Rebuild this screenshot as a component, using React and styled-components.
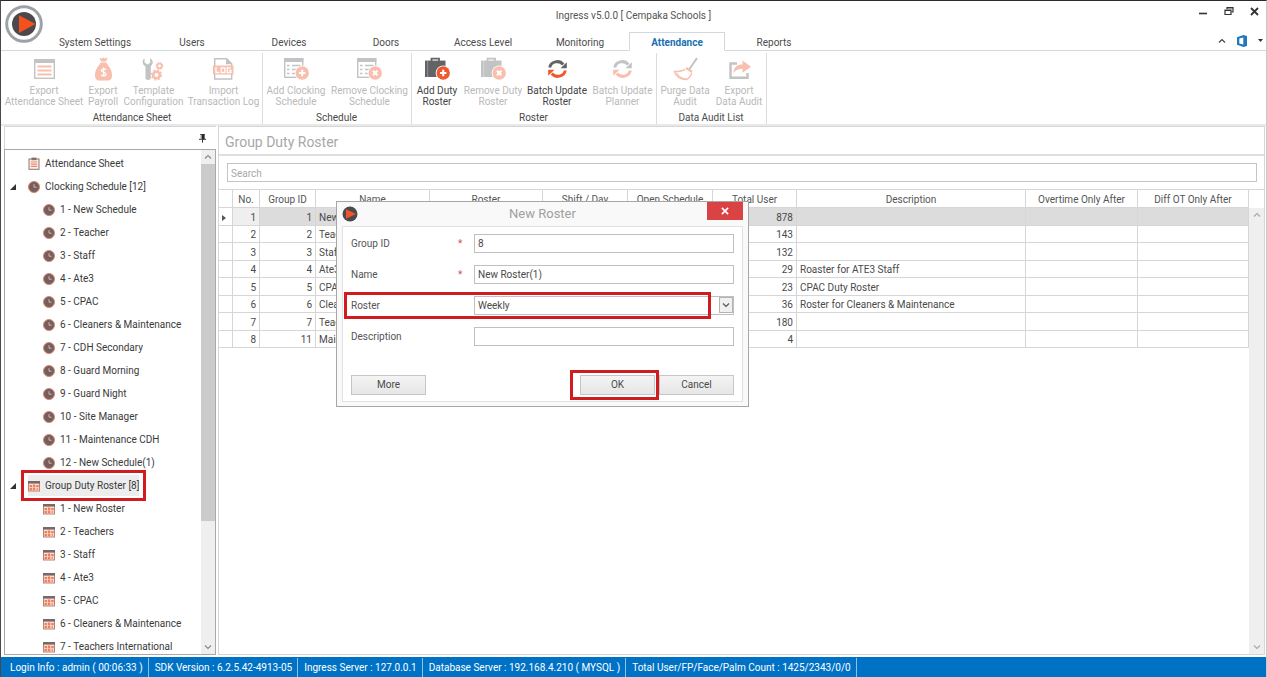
import React from "react";
import styled, { createGlobalStyle } from "styled-components";

const ORANGE = "#ee5a30";
const DARK = "#626367";
const LINE = "#d6d6d6";
const RED = "#d01c1f";

const GlobalStyle = createGlobalStyle`
  *, *::before, *::after { box-sizing: border-box; }
  html, body, #root { height: 100%; }
  body { margin: 0; overflow: hidden; }
  body, button, input, select {
    font-family: Roboto, "Open Sans", sans-serif;
    font-size: 10px;
    line-height: 14px;
    color: #4a4a4a;
  }
  ul { list-style: none; margin: 0; padding: 0; }
  button { border: 0; background: none; padding: 0; }
  svg { display: block; flex: none; }
`;

const Window = styled.div`
  position: relative;
  display: flex;
  flex-direction: column;
  height: 100vh;
  background: #fff;
  border-top: 1px solid #2e2a2e;
  border-left: 1px solid #4a484a;
  border-right: 1px solid #c9c9c9;
`;

const Header = styled.header`
  position: relative;
  display: flex;
  flex-direction: column;
  height: 50px;
  border-bottom: 1px solid #d4d7db;
`;

const TitleBar = styled.div`
  display: grid;
  grid-template-columns: 1fr auto 1fr;
  align-items: center;
  height: 31px;
`;

const WindowTitle = styled.h1`
  grid-column: 2;
  margin: 0;
  padding-bottom: 2px;
  font-size: 10px;
  font-weight: 400;
  color: #555;
`;

const WindowButtons = styled.div`
  display: flex;
  justify-content: flex-end;
  gap: 16px;
  padding: 0 7px 11px 0;
`;

const Logo = styled.div`
  position: absolute;
  left: 3px;
  top: 3px;
`;

const TabRow = styled.nav`
  display: flex;
  flex: 1;
  gap: 1px;
  padding-left: 46px;
  margin-bottom: -1px;
`;

const Tab = styled.button`
  width: 96px;
  height: 19px;
  padding-top: 3px;
  color: ${(p) => (p.$active ? "#1a6faf" : "#4c4c4c")};
  font-weight: ${(p) => (p.$active ? 700 : 400)};
  background: ${(p) => (p.$active ? "#fff" : "none")};
  border: 1px solid ${(p) => (p.$active ? "#d4d7db" : "transparent")};
  border-bottom-color: ${(p) => (p.$active ? "#fff" : "transparent")};
`;

const TabTools = styled.div`
  display: flex;
  align-items: center;
  gap: 10px;
  margin-left: auto;
  padding: 0 3px 2px 0;
`;

const Ribbon = styled.div`
  display: flex;
  height: 75px;
  padding: 2px 0 0 2px;
  border-bottom: 2px solid #e9e9e9;
`;

const RibbonGroup = styled.section`
  display: flex;
  flex-direction: column;
  align-items: center;
  padding-right: 1px;
  border-right: 1px solid #dcdcdc;
`;

const RibbonButtons = styled.div`
  display: flex;
  flex: 1;
`;

const RibbonButton = styled.button`
  display: flex;
  flex-direction: column;
  align-items: center;
  gap: 3px;
  width: ${(p) => p.$width}px;
  padding-top: 4px;
  line-height: 11px;
  white-space: pre;
  color: #444;
  &:disabled { color: #b9b9b9; }
  &:disabled svg { opacity: 0.38; }
`;

const GroupLabel = styled.div`
  line-height: 12px;
`;

const Body = styled.div`
  display: flex;
  flex: 1;
  min-height: 0;
`;

const Sidebar = styled.aside`
  display: flex;
  flex-direction: column;
  width: 217px;
  padding: 0 2px 2px 3px;
`;

const SidebarHeader = styled.div`
  display: flex;
  justify-content: flex-end;
  align-items: center;
  height: 23px;
  padding-right: 10px;
  border-left: 1px solid ${LINE};
  border-top: 1px solid ${LINE};
`;

const TreePanel = styled.div`
  display: flex;
  flex: 1;
  min-height: 0;
  border: 1px solid #a9a9a9;
`;

const TreeArea = styled.div`
  flex: 1;
  overflow: hidden;
  padding-top: 2px;
`;

const Tree = styled.ul``;

const TreeRow = styled.li`
  display: flex;
  align-items: center;
  height: 23px;
  padding-left: ${(p) => (p.$child ? 38 : 5)}px;
`;

const Twisty = styled.span`
  width: 18px;
`;

const TreeItem = styled.button`
  position: relative;
  display: flex;
  align-items: center;
  gap: 5px;
  height: 21px;
  color: #3a3a3a;
  white-space: nowrap;
  background: ${(p) => (p.$selected ? "#ededed" : "none")};
`;

const Marker = styled.span`
  position: absolute;
  inset: ${(p) => p.$inset};
  border: 3px solid ${RED};
  pointer-events: none;
`;

const ScrollBar = styled.div`
  display: flex;
  flex-direction: column;
  align-items: center;
  width: ${(p) => p.$width}px;
  background: #efefef;
`;

const ScrollButton = styled.button`
  display: grid;
  place-items: center;
  width: 100%;
  height: 14px;
`;

const Thumb = styled.div`
  width: 100%;
  height: 357px;
  background: #cbcbcb;
`;

const Spacer = styled.div`
  flex: 1;
`;

const Main = styled.main`
  display: flex;
  flex-direction: column;
  flex: 1;
  min-width: 0;
  margin: 0 1px 2px 0;
  border: 1px solid ${LINE};
`;

const PageTitle = styled.h2`
  margin: 0;
  padding: 0 6px;
  height: 29px;
  line-height: 30px;
  font-size: 14px;
  font-weight: 400;
  color: #a8a8a8;
  border-bottom: 2px solid #dedede;
`;

const SearchArea = styled.div`
  padding: 7px 7px 7px 8px;
`;

const SearchBox = styled.input`
  display: block;
  width: 100%;
  height: 19px;
  padding: 1px 3px 0;
  border: 1px solid #c4c4c4;
  outline: 0;
  &::placeholder { color: #a8a8a8; opacity: 1; }
`;

const GridArea = styled.div`
  display: flex;
  flex: 1;
  min-height: 0;
  border-top: 1px solid ${LINE};
`;

const GridBody = styled.div`
  flex: 1;
  min-width: 0;
`;

const GridTable = styled.table`
  width: 100%;
  table-layout: fixed;
  border-collapse: separate;
  border-spacing: 0;
`;

const Col = styled.col`
  width: ${(p) => (p.$width ? p.$width + "px" : "auto")};
`;

const HeadCell = styled.th`
  height: 18px;
  padding: 2px 0 0;
  font-weight: 400;
  color: #555;
  border-right: 1px solid ${LINE};
  border-bottom: 1px solid ${LINE};
`;

const Row = styled.tr`
  height: 17px;
  &:nth-child(odd) { height: 18px; }
  td { background: ${(p) => (p.$selected ? "#dcdcdc" : "#fff")}; }
  td:nth-child(1) { background: #fff; }
  td:nth-child(2) { background: ${(p) => (p.$selected ? "#efefef" : "#fff")}; }
`;

const Cell = styled.td`
  padding: 2px 3px 0;
  line-height: 14px;
  text-align: ${(p) => (p.$right ? "right" : "left")};
  white-space: nowrap;
  overflow: hidden;
  border-right: 1px solid ${LINE};
  border-bottom: 1px solid ${LINE};
`;

const GridSide = styled.div`
  display: flex;
  flex-direction: column;
  padding-top: 18px;
`;

const SideScroll = styled(ScrollBar)`
  flex: 1;
`;

const StatusBar = styled.footer`
  display: flex;
  align-items: center;
  height: 20px;
  padding-left: 3px;
  background: #0072c6;
`;

const StatusItem = styled.span`
  padding: 1px 5px 0 6px;
  line-height: 18px;
  color: #fff;
  border-right: 1px solid #8fc0e6;
`;

const Dialog = styled.form`
  position: absolute;
  left: 335px;
  top: 200px;
  width: 413px;
  padding: 0 5px 4px;
  background: #f9f9f9;
  border: 1px solid #a6a6a6;
`;

const DialogHeader = styled.div`
  display: grid;
  grid-template-columns: 1fr auto 1fr;
  align-items: center;
  height: 24px;
`;

const DialogTitle = styled.h3`
  margin: 0;
  font-size: 13px;
  font-weight: 400;
  color: #a0a0a0;
`;

const CloseButton = styled.button`
  display: grid;
  place-items: center;
  justify-self: end;
  align-self: start;
  width: 36px;
  height: 18px;
  background: #d94343;
`;

const DialogPanel = styled.div`
  padding: 7px 8px 6px;
  background: #fff;
  border: 1px solid #e2e2e2;
`;

const Field = styled.div`
  position: relative;
  display: grid;
  grid-template-columns: 107px 16px 1fr;
  align-items: center;
  height: 19px;
  margin-bottom: 12px;
`;

const Label = styled.label`
  color: #555;
`;

const Required = styled.span`
  color: #d85050;
`;

const Control = styled.div`
  position: relative;
  grid-column: 3;
  height: 19px;
`;

const TextBox = styled.input`
  display: block;
  width: 100%;
  height: 19px;
  padding: 0 3px;
  background: #fff;
  border: 1px solid #c0c0c0;
  border-radius: 0;
  outline: 0;
`;

const SelectBox = styled(TextBox)`
  appearance: none;
`;

const DropArrow = styled.span`
  position: absolute;
  right: 1px;
  top: 1px;
  display: grid;
  place-items: center;
  width: 14px;
  height: 16px;
  background: #f0f0f0;
  border: 1px solid #b4b4b4;
  pointer-events: none;
`;

const DialogActions = styled.div`
  display: flex;
  gap: 4px;
  margin-top: 29px;
`;

const PushButton = styled.button`
  position: relative;
  width: 75px;
  height: 20px;
  background: linear-gradient(#f4f4f4, #e6e6e6);
  border: 1px solid #c6c6c6;
`;

/* ---------- icons ---------- */

const Play = ({ size = 16 }) => (
  <svg width={size} height={size} viewBox="0 0 16 16">
    <circle cx="8" cy="8" r="7.5" fill="#4b494b" />
    <path d="M4 3.2 14 8 4 12.8z" fill="#f0542a" />
  </svg>
);

const AppLogo = () => (
  <svg width="40" height="40" viewBox="0 0 40 40">
    <circle cx="20" cy="20" r="17.3" fill="#fff" stroke="#9ca2a6" strokeWidth="3" />
    <circle cx="20" cy="20" r="12" fill="#4b494b" />
    <path d="M15 11.2 31.5 20 15 29z" fill="#f4511e" />
  </svg>
);

const Chevron = ({ down, color = "#8a8a8a" }) => (
  <svg width="8" height="6" viewBox="0 0 8 6" fill="none" stroke={color} strokeWidth="1.2">
    <path d={down ? "M1 1.5 4 4.5 7 1.5" : "M1 4.5 4 1.5 7 4.5"} />
  </svg>
);

const Cross = ({ color, size = 9, weight = 1.8 }) => (
  <svg width={size} height={size} viewBox="0 0 9 9" stroke={color} strokeWidth={weight}>
    <path d="M1 1l7 7M8 1 1 8" />
  </svg>
);

const ClockIcon = () => (
  <svg width="12" height="12" viewBox="0 0 12 12">
    <circle cx="6" cy="6" r="5.5" fill="#735f5e" stroke="#dd8468" strokeWidth="1" />
    <path d="M6 3.2v3h2.6" fill="none" stroke="#cdbab6" strokeWidth="1" />
  </svg>
);

const RosterIcon = () => (
  <svg width="12" height="12" viewBox="0 0 12 12">
    <rect x="0.5" y="1.5" width="11" height="9.5" fill="#fbe0d6" stroke="#b98478" />
    <rect x="0" y="1" width="12" height="2.6" fill="#77696a" />
    <path d="M1.5 5h2.5v2.3H1.5zM4.8 4.4h2.5v2.5H4.8zM8.2 5h2.5v2.3H8.2zM1.5 8h2.5v2.2H1.5zM4.8 7.6h2.5v2.6H4.8z" fill="#ee7f5e" />
    <rect x="8.5" y="8.2" width="1.6" height="1.6" fill="#ee7f5e" />
  </svg>
);

const SheetIcon = () => (
  <svg width="12" height="13" viewBox="0 0 12 13">
    <rect x="1" y="2" width="10" height="10.3" fill="#fdeee8" stroke="#8b7672" />
    <rect x="3.5" y="0.6" width="5" height="2.6" fill="#85706c" />
    <path d="M2.8 5h6.4M2.8 7.2h6.4M2.8 9.4h6.4" stroke="#ea8c6f" strokeWidth="1.2" />
  </svg>
);

const PinIcon = () => (
  <svg width="7" height="9" viewBox="0 0 7 9">
    <path d="M1.2.5h4.6M3.5 5.5v3.2M0 5.3h7" stroke="#333" fill="none" />
    <path d="M1.5.8h1.6v4.5H1.5z" fill="#999" />
    <path d="M3 .8h2.6v4.5H3z" fill="#222" />
  </svg>
);

const Badge = ({ remove }) => (
  <g>
    <circle cx="18.2" cy="16" r="7.6" fill="#fff" />
    <circle cx="18.2" cy="16" r="6.7" fill={ORANGE} />
    <path
      d={remove ? "M16 13.8l4.4 4.4m0-4.4-4.4 4.4" : "M18.2 12.8v6.4M15 16h6.4"}
      stroke="#fff"
      strokeWidth="2"
    />
  </g>
);

const icons = {
  sheet: (
    <>
      <rect x="2.7" y="2.7" width="19.6" height="18.6" fill="#fff" stroke={DARK} strokeWidth="1.4" />
      <rect x="2" y="2" width="21" height="4" fill={DARK} />
      <path d="M5.5 9.5h14M5.5 13.5h14M5.5 17.5h14" stroke={ORANGE} strokeWidth="1.8" />
    </>
  ),
  money: (
    <>
      <path d="M8.5 0.6 11 1.6 12.5.4 14 1.6 16.7.6 15 4.5h-5z" fill={ORANGE} />
      <path d="M9.8 5.5h5.4C17 8.5 21 12 21 18c0 4-1.5 5.5-4 5.5H8c-2.5 0-4-1.5-4-5.5C4 12 8 8.5 9.8 5.5z" fill={ORANGE} />
      <path d="M15 12.8c-1-1.2-4.6-1.3-4.6.8 0 2.2 4.6 1.2 4.6 3.6 0 2.2-4 2-5 .7M12.6 10.6v9" fill="none" stroke="#fff" strokeWidth="1.3" />
    </>
  ),
  tools: (
    <>
      <path d="M3.5 1.2v4.3L6.5 7.5 9.2 5.8V1.2C12.5 3 12.5 7 9.8 9v12c0 2.5-5.3 2.5-5.3 0V9.5C1 7.5.8 3.5 3.5 1.2z" fill={DARK} />
      <circle cx="18.5" cy="9" r="2.3" fill="none" stroke={ORANGE} strokeWidth="1.8" />
      <circle cx="18.5" cy="9" r="3.4" fill="none" stroke={ORANGE} strokeWidth="1" strokeDasharray="1.5 1.2" />
      <circle cx="15.5" cy="18" r="3.3" fill="none" stroke={ORANGE} strokeWidth="2.6" />
      <circle cx="15.5" cy="18" r="4.9" fill="none" stroke={ORANGE} strokeWidth="1.4" strokeDasharray="2.1 1.7" />
    </>
  ),
  log: (
    <>
      <path d="M3.7 1.7h12l5 5v15.3h-17z" fill="#fff" stroke={DARK} strokeWidth="1.4" />
      <path d="M15 1.2v6h6.2z" fill={DARK} />
      <rect x="2" y="8.5" width="20.5" height="9" fill={ORANGE} />
      <g fill="none" stroke="#fff" strokeWidth="1.3">
        <path d="M5 10.3v5.2h3.2M19.8 10.9h-3.6v4.6h3.6v-2.2H18" />
        <rect x="10.2" y="10.9" width="3.6" height="4.6" />
      </g>
    </>
  ),
  schedule: (remove) => (
    <>
      <rect x="0.7" y="1.7" width="18" height="18.6" fill="#fff" stroke={DARK} strokeWidth="1.4" />
      <rect x="0" y="1" width="19.4" height="4" fill={DARK} />
      <path d="M3 8.5h2.5M8 8.5h8.5M3 12.5h2.5M8 12.5h5M3 16.5h2.5M8 16.5h4" stroke={DARK} strokeWidth="1.5" />
      <Badge remove={remove} />
    </>
  ),
  duty: (remove) => (
    <>
      <path d="M6.5 4V1.7h7.5V4" fill="none" stroke={DARK} strokeWidth="1.8" />
      <path d="M0 3.6h20.5V20H0z" fill={DARK} />
      <path d="M2.7 3.6V20" stroke="#a5a6a8" strokeWidth=".7" />
      <Badge remove={remove} />
    </>
  ),
  refresh: (
    <>
      <path d="M4.7 10.5C6 4.5 14 2.5 18.2 7.5" fill="none" stroke={DARK} strokeWidth="3" />
      <path d="M21.8 5.2v6h-6.3z" fill={DARK} />
      <path d="M20.3 13.5C19 19.5 11 21.5 6.8 16.5" fill="none" stroke={ORANGE} strokeWidth="3" />
      <path d="M3.2 18.8v-6h6.3z" fill={ORANGE} />
    </>
  ),
  broom: (
    <>
      <path d="M24 1 16.5 12" stroke={DARK} strokeWidth="2" />
      <path d="M13 11l6 4" stroke={ORANGE} strokeWidth="2.4" />
      <path d="M12 12.3C9 14.5 5 14.6 1.5 14.6c1.5 5 6 7.9 12 7.9 3-1.6 4.6-3.5 5-6.5" fill="#fff" stroke={ORANGE} strokeWidth="1.5" />
      <path d="M3.5 16c2 4 5 5.5 9.5 5.8" fill="none" stroke={ORANGE} strokeWidth="1.3" />
    </>
  ),
  share: (
    <>
      <path d="M10 6.5H3.5v14.3h17V16" fill="none" stroke={DARK} strokeWidth="2.4" />
      <path d="M6.5 16C7 9.5 10.5 7.5 15.5 7.5V3.5L24 9.8l-8.5 6v-4c-4 0-6.5 1-9 4.2z" fill={ORANGE} />
    </>
  ),
};

const RibbonIcon = ({ children }) => (
  <svg width="25" height="25" viewBox="0 0 25 25">{children}</svg>
);

/* ---------- data ---------- */

const tabs = ["System Settings", "Users", "Devices", "Doors", "Access Level", "Monitoring", "Attendance", "Reports"];

const ribbon = [
  {
    label: "Attendance Sheet",
    items: [
      { text: "Export\nAttendance Sheet", width: 82, icon: icons.sheet },
      { text: "Export\nPayroll", width: 36, icon: icons.money },
      { text: "Template\nConfiguration", width: 65, icon: icons.tools },
      { text: "Import\nTransaction Log", width: 75, icon: icons.log },
    ],
  },
  {
    label: "Schedule",
    items: [
      { text: "Add Clocking\nSchedule", width: 66, icon: icons.schedule(false) },
      { text: "Remove Clocking\nSchedule", width: 81, icon: icons.schedule(true) },
    ],
  },
  {
    label: "Roster",
    items: [
      { text: "Add Duty\nRoster", width: 50, icon: icons.duty(false), enabled: true },
      { text: "Remove Duty\nRoster", width: 62, icon: icons.duty(true) },
      { text: "Batch Update\nRoster", width: 66, icon: icons.refresh, enabled: true },
      { text: "Batch Update\nPlanner", width: 65, icon: icons.refresh },
    ],
  },
  {
    label: "Data Audit List",
    items: [
      { text: "Purge Data\nAudit", width: 56, icon: icons.broom },
      { text: "Export\nData Audit", width: 52, icon: icons.share },
    ],
  },
];

const schedules = [
  "1 - New Schedule", "2 - Teacher", "3 - Staff", "4 - Ate3", "5 - CPAC", "6 - Cleaners & Maintenance",
  "7 - CDH Secondary", "8 - Guard Morning", "9 - Guard Night", "10 - Site Manager", "11 - Maintenance CDH",
  "12 - New Schedule(1)",
];

const rosters = [
  "1 - New Roster", "2 - Teachers", "3 - Staff", "4 - Ate3", "5 - CPAC", "6 - Cleaners & Maintenance",
  "7 - Teachers International",
];

const columns = [
  ["", 14], ["No.", 27], ["Group ID", 56], ["Name", 114], ["Roster", 113], ["Shift / Day", 85],
  ["Open Schedule", 85], ["Total User", 84], ["Description", 0], ["Overtime Only After", 112],
  ["Diff OT Only After", 111],
];

const rows = [
  [1, "New Roster", 878, ""],
  [2, "Teachers", 143, ""],
  [3, "Staff", 132, ""],
  [4, "Ate3", 29, "Roaster for ATE3 Staff"],
  [5, "CPAC", 23, "CPAC Duty Roster"],
  [6, "Cleaners & Maintenance", 36, "Roster for Cleaners & Maintenance"],
  [7, "Teachers International", 180, ""],
  [11, "Maintenance", 4, ""],
];

const status = [
  "Login Info : admin ( 00:06:33 )",
  "SDK Version : 6.2.5.42-4913-05",
  "Ingress Server : 127.0.0.1",
  "Database Server : 192.168.4.210 ( MYSQL )",
  "Total User/FP/Face/Palm Count : 1425/2343/0/0",
];

const Expander = () => (
  <Twisty>
    <svg width="6" height="6" viewBox="0 0 6 6"><path d="M6 0v6H0z" fill="#333" /></svg>
  </Twisty>
);

export default function App() {
  return (
    <Window>
      <GlobalStyle />
      <Header>
        <TitleBar>
          <WindowTitle>Ingress v5.0.0 [ Cempaka Schools ]</WindowTitle>
          <WindowButtons>
            <button aria-label="Minimize">
              <svg width="10" height="10" viewBox="0 0 10 10"><path d="M1 7.5h8" stroke="#333" strokeWidth="1.6" /></svg>
            </button>
            <button aria-label="Restore">
              <svg width="10" height="10" viewBox="0 0 10 10" fill="none" stroke="#333">
                <path d="M3 3V1.5h6v4.5H7.5M3 2h6" strokeWidth="1.2" />
                <path d="M1 4h6v4.5H1zM1 4.5h6" strokeWidth="1.2" />
              </svg>
            </button>
            <button aria-label="Close"><Cross color="#333" /></button>
          </WindowButtons>
        </TitleBar>
        <TabRow>
          {tabs.map((t) => <Tab key={t} $active={t === "Attendance"}>{t}</Tab>)}
          <TabTools>
            <button aria-label="Collapse ribbon"><Chevron color="#444" /></button>
            <svg width="12" height="12" viewBox="0 0 12 12">
              <path d="M1 2.3 7.5 0 11 1v10l-3.5 1L1 9.8zM3.3 3.6v5l4 .9V2.5z" fill="#2178bd" fillRule="evenodd" />
            </svg>
            <button aria-label="Options">
              <svg width="5" height="3" viewBox="0 0 5 3"><path d="M0 0h5L2.5 3z" fill="#333" /></svg>
            </button>
          </TabTools>
        </TabRow>
        <Logo><AppLogo /></Logo>
      </Header>

      <Ribbon>
        {ribbon.map((g) => (
          <RibbonGroup key={g.label}>
            <RibbonButtons>
              {g.items.map((b) => (
                <RibbonButton key={b.text} $width={b.width} disabled={!b.enabled}>
                  <RibbonIcon>{b.icon}</RibbonIcon>
                  {b.text}
                </RibbonButton>
              ))}
            </RibbonButtons>
            <GroupLabel>{g.label}</GroupLabel>
          </RibbonGroup>
        ))}
      </Ribbon>

      <Body>
        <Sidebar>
          <SidebarHeader><button aria-label="Pin panel"><PinIcon /></button></SidebarHeader>
          <TreePanel>
            <TreeArea>
              <Tree>
                <TreeRow>
                  <Twisty />
                  <TreeItem><SheetIcon />Attendance Sheet</TreeItem>
                </TreeRow>
                <TreeRow>
                  <Expander />
                  <TreeItem><ClockIcon />Clocking Schedule [12]</TreeItem>
                </TreeRow>
                {schedules.map((s) => (
                  <TreeRow key={s} $child><TreeItem><ClockIcon />{s}</TreeItem></TreeRow>
                ))}
                <TreeRow>
                  <Expander />
                  <TreeItem $selected>
                    <RosterIcon />Group Duty Roster [8]
                    <Marker $inset="-5px -7px" />
                  </TreeItem>
                </TreeRow>
                {rosters.map((s) => (
                  <TreeRow key={s} $child><TreeItem><RosterIcon />{s}</TreeItem></TreeRow>
                ))}
              </Tree>
            </TreeArea>
            <ScrollBar $width={14}>
              <ScrollButton aria-label="Scroll up"><Chevron /></ScrollButton>
              <Thumb />
              <Spacer />
              <ScrollButton aria-label="Scroll down"><Chevron down /></ScrollButton>
            </ScrollBar>
          </TreePanel>
        </Sidebar>

        <Main>
          <PageTitle>Group Duty Roster</PageTitle>
          <SearchArea><SearchBox aria-label="Search" placeholder="Search" /></SearchArea>
          <GridArea>
            <GridBody>
              <GridTable>
                <colgroup>{columns.map(([n, w]) => <Col key={n} $width={w} />)}</colgroup>
                <thead>
                  <tr>{columns.map(([n]) => <HeadCell key={n}>{n}</HeadCell>)}</tr>
                </thead>
                <tbody>
                  {rows.map(([id, name, total, desc], i) => (
                    <Row key={id} $selected={i === 0}>
                      <Cell>
                        {i === 0 && <svg width="4" height="6" viewBox="0 0 4 6"><path d="M0 0l4 3-4 3z" fill="#555" /></svg>}
                      </Cell>
                      <Cell $right>{i + 1}</Cell>
                      <Cell $right>{id}</Cell>
                      <Cell>{name}</Cell>
                      <Cell />
                      <Cell />
                      <Cell />
                      <Cell $right>{total}</Cell>
                      <Cell>{desc}</Cell>
                      <Cell />
                      <Cell />
                    </Row>
                  ))}
                </tbody>
              </GridTable>
            </GridBody>
            <GridSide>
              <SideScroll $width={15}>
                <ScrollButton aria-label="Scroll up"><Chevron color="#aaa" /></ScrollButton>
                <Spacer />
                <ScrollButton aria-label="Scroll down"><Chevron down color="#aaa" /></ScrollButton>
              </SideScroll>
            </GridSide>
          </GridArea>
        </Main>
      </Body>

      <StatusBar>
        {status.map((s) => <StatusItem key={s}>{s}</StatusItem>)}
      </StatusBar>

      <Dialog role="dialog" aria-label="New Roster" onSubmit={(e) => e.preventDefault()}>
        <DialogHeader>
          <Play />
          <DialogTitle>New Roster</DialogTitle>
          <CloseButton type="button" aria-label="Close dialog"><Cross color="#fff" size={8} /></CloseButton>
        </DialogHeader>
        <DialogPanel>
          <Field>
            <Label htmlFor="gid">Group ID</Label>
            <Required>*</Required>
            <Control><TextBox id="gid" defaultValue="8" /></Control>
          </Field>
          <Field>
            <Label htmlFor="name">Name</Label>
            <Required>*</Required>
            <Control><TextBox id="name" defaultValue="New Roster(1)" /></Control>
          </Field>
          <Field>
            <Label htmlFor="roster">Roster</Label>
            <Control>
              <SelectBox as="select" id="roster" defaultValue="Weekly">
                <option>Weekly</option>
              </SelectBox>
              <DropArrow><Chevron down color="#555" /></DropArrow>
            </Control>
            <Marker $inset="-4px 23px -4px -7px" />
          </Field>
          <Field>
            <Label htmlFor="desc">Description</Label>
            <Control><TextBox id="desc" /></Control>
          </Field>
          <DialogActions>
            <PushButton type="button">More</PushButton>
            <Spacer />
            <PushButton>OK<Marker $inset="-6px -5px -6px -11px" /></PushButton>
            <PushButton type="button">Cancel</PushButton>
          </DialogActions>
        </DialogPanel>
      </Dialog>
    </Window>
  );
}
